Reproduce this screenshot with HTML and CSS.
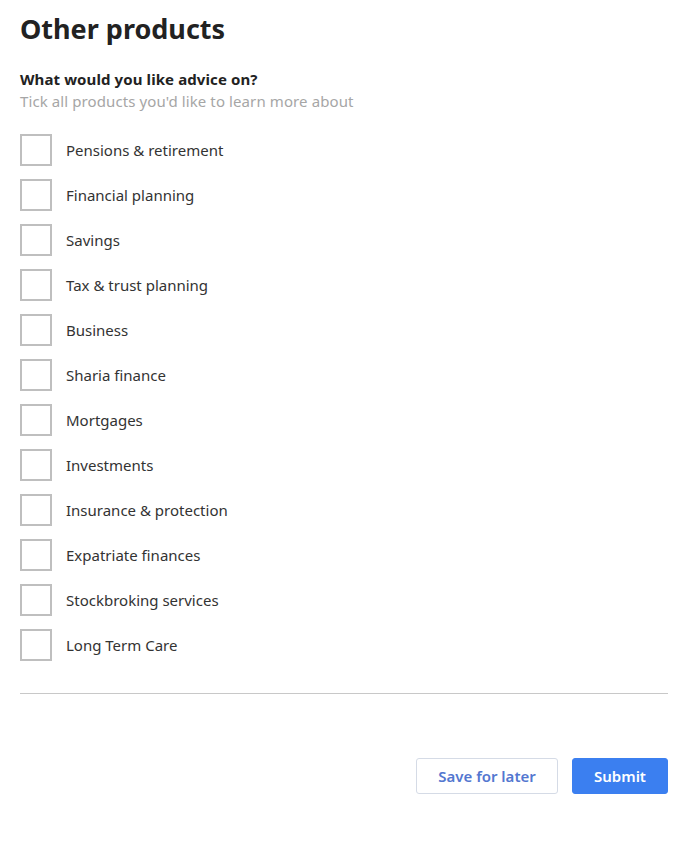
FILE: index.html
```html
<!DOCTYPE html>
<html>
<head>
<meta charset="utf-8">
<link rel="stylesheet" href="styles.css">
</head>
<body>
<div class="page">
  <h1 class="title">Other products</h1>
  <div class="question">What would you like advice on?</div>
  <div class="hint">Tick all products you'd like to learn more about</div>
  <ul class="options">
    <li class="option"><span class="box"></span><span class="label">Pensions &amp; retirement</span></li>
    <li class="option"><span class="box"></span><span class="label">Financial planning</span></li>
    <li class="option"><span class="box"></span><span class="label">Savings</span></li>
    <li class="option"><span class="box"></span><span class="label">Tax &amp; trust planning</span></li>
    <li class="option"><span class="box"></span><span class="label">Business</span></li>
    <li class="option"><span class="box"></span><span class="label">Sharia finance</span></li>
    <li class="option"><span class="box"></span><span class="label">Mortgages</span></li>
    <li class="option"><span class="box"></span><span class="label">Investments</span></li>
    <li class="option"><span class="box"></span><span class="label">Insurance &amp; protection</span></li>
    <li class="option"><span class="box"></span><span class="label">Expatriate finances</span></li>
    <li class="option"><span class="box"></span><span class="label">Stockbroking services</span></li>
    <li class="option"><span class="box"></span><span class="label">Long Term Care</span></li>
  </ul>
  <hr class="divider">
  <div class="actions">
    <button class="btn btn-secondary">Save for later</button>
    <button class="btn btn-primary">Submit</button>
  </div>
</div>
</body>
</html>
```
FILE: styles.css
```css
* { box-sizing: border-box; }
html, body { margin: 0; padding: 0; background: #fff; }
body { font-family: "Noto Sans", "Open Sans", sans-serif; color: #333; }
.page { padding: 10px 20px 0 20px; }
.title {
  margin: 0;
  font-size: 27px;
  line-height: 38px;
  font-weight: 700;
  color: #222;
}
.question {
  margin-top: 20px;
  font-size: 15px;
  line-height: 22px;
  font-weight: 700;
  color: #222;
  letter-spacing: 0.1px;
}
.hint {
  font-size: 15px;
  line-height: 22px;
  color: #a6a6a6;
  letter-spacing: 0.1px;
}
.options {
  list-style: none;
  margin: 22px 0 0 0;
  padding: 0;
  display: flex;
  flex-direction: column;
  gap: 13px;
}
.option {
  display: flex;
  align-items: center;
  height: 32px;
}
.box {
  width: 32px;
  height: 32px;
  border: 2px solid #bfbfbf;
  background: #fff;
  flex: none;
}
.label {
  margin-left: 14px;
  font-size: 15px;
  color: #333;
}
.divider {
  margin: 32px 0 0 0;
  border: 0;
  border-top: 1px solid #c8c8c8;
  height: 0;
}
.actions {
  margin-top: 64px;
  display: flex;
  justify-content: flex-end;
  gap: 14px;
}
.btn {
  height: 36px;
  font-family: "Noto Sans", "Open Sans", sans-serif;
  font-size: 15px;
  font-weight: 600;
  border-radius: 3px;
  padding: 0;
  cursor: pointer;
}
.btn-secondary {
  width: 142px;
  background: #fff;
  border: 1px solid #d5dbe6;
  color: #5377d0;
}
.btn-primary {
  width: 96px;
  background: #3b7ff0;
  border: 1px solid #3b7ff0;
  color: #fff;
}
```
